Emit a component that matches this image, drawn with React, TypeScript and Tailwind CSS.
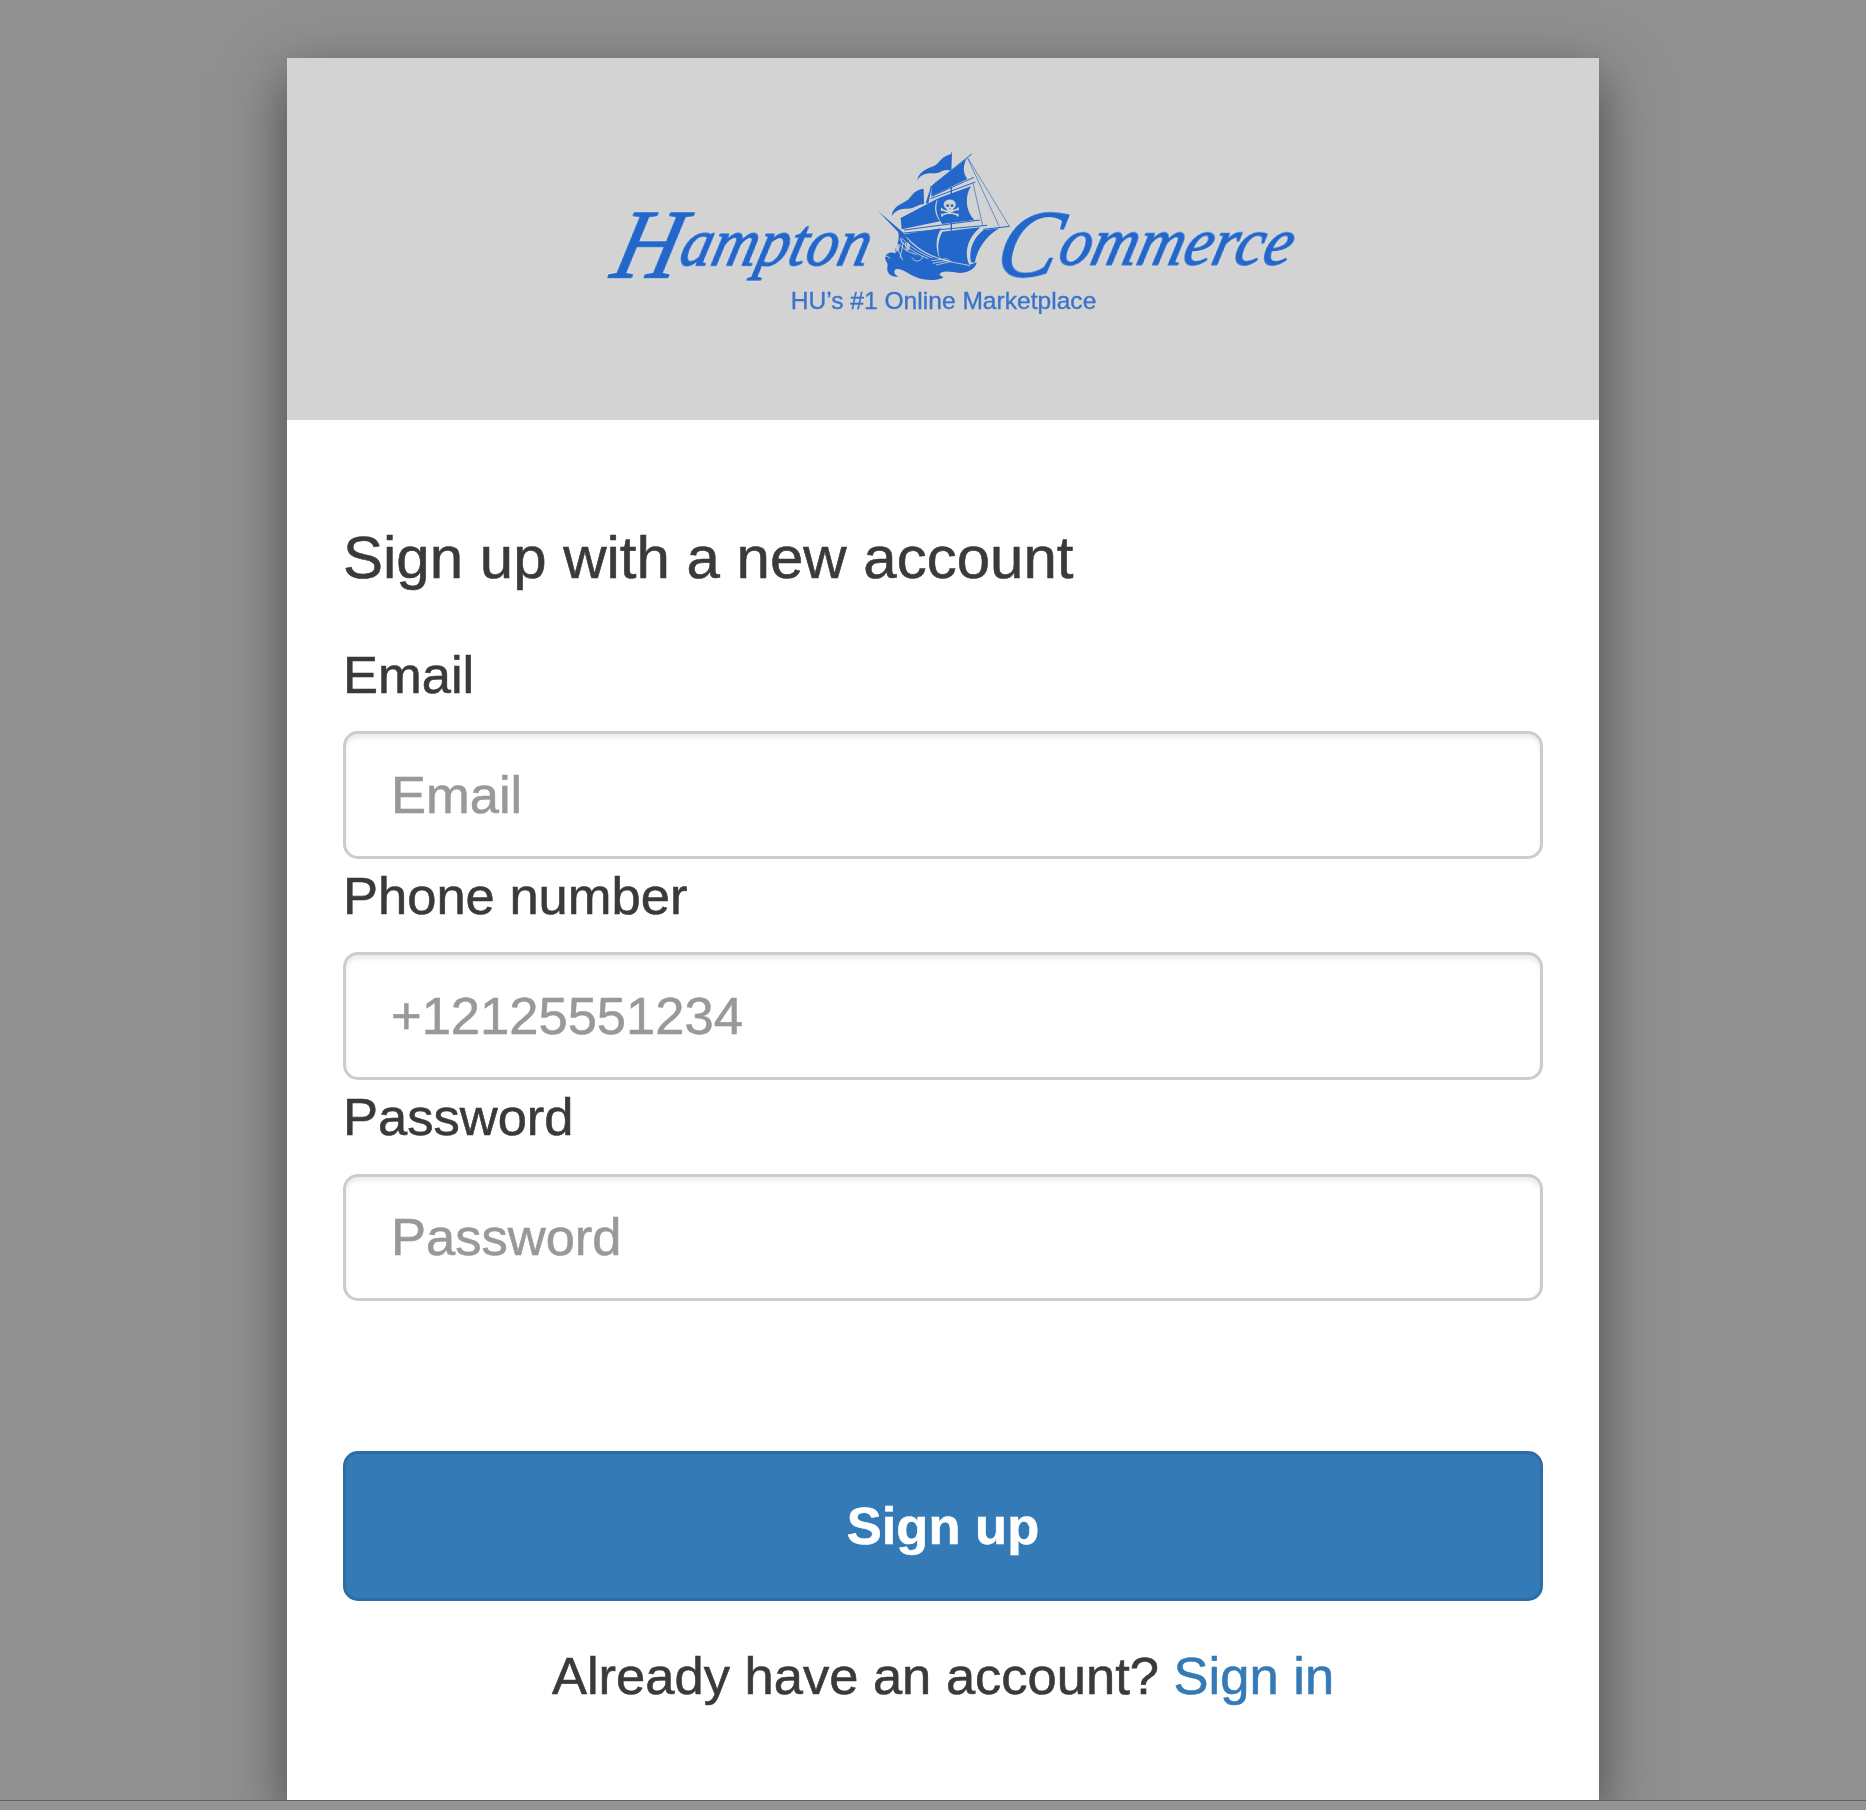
const BLUE = "#2467cb";
const PALE = "#d3d3d3";

function Ship() {
  return (
    <g transform="translate(810 0)" fill={BLUE} stroke="none">
      {/* flags */}
      <path d="M274 42 C246 48 240 66 226 76 C206 86 178 90 171 122 C182 103 198 100 216 100 C244 102 250 82 274 93 V36 H276 V94Z" />
      <path d="M191 146 C165 149 156 165 146 178 C127 192 98 198 95 228 C106 211 122 206 141 206 C166 206 174 192 189 193 H192Z" />
      {/* upper sail */}
      <path d="M215 137 L320 56 C308 76 309 100 322 117 L214 169Z" />
      {/* middle sails */}
      <path d="M122 235 L233 176 C220 198 224 224 240 244 L125 268Z" />
      <path d="M236 174 L333 139 C314 168 316 214 343 240 L247 252 C226 224 225 196 236 174Z" />
      {/* lower sails and bow */}
      <path d="M132 283 L244 265 C226 292 226 330 240 356 C205 345 165 320 132 283Z" />
      <path d="M247 275 L361 262 C316 300 314 345 329 376 C300 370 270 363 240 356 C231 325 234 298 247 275Z" />
      <path d="M371 270 L418 265 C376 290 354 325 344 368 L333 367 C326 330 338 295 371 270Z" />
      {/* hull */}
      <path d="M114 272 C122 275 128 282 136 290 C165 325 206 350 252 358 L330 376 L348 368 L310 386 L140 372 L108 354 L106 325 C112 312 120 300 114 272Z" />
      {/* waves */}
      <path d="M75 352 C79 334 107 333 118 350 C128 364 139 345 160 349 C190 360 220 378 260 374 C290 376 325 380 350 367 C347 389 320 399 300 399 C275 397 246 388 238 404 C243 407 248 410 250 413 C228 423 194 422 169 412 C142 402 125 383 107 388 C98 395 105 405 115 410 C94 413 79 400 82 381 C86 368 75 365 75 352Z" />
      <path d="M75 352 C80 345 87 350 89 357" fill="none" stroke={PALE} strokeWidth="3" />
      {/* bowsprit, mast and rigging */}
      <path d="M54 213 L130 278 L150 306 L128 290Z" />
      <g fill="none" stroke={BLUE}>
        <path d="M203 190 L214 138 M199 190 L209 158 M274 140 V170 M274 248 V272" strokeWidth="4" />
        <path d="M220 134 L335 42 M215 169 L342 112 M212 176 L346 126 M122 236 L236 176 M132 270 L360 240 M131 279 L381 256 M370 268 L449 259" strokeWidth="3" />
        <path d="M323 53 L448 259 M323 55 L418 260 M339 130 L368 256" strokeWidth="2.4" opacity=".8" />
      </g>
      <g fill="none" stroke={PALE} strokeWidth="2.5">
        <path d="M125 294 C155 325 190 345 218 354 M120 298 C142 326 170 342 205 356 M140 292 C175 333 215 352 275 365 M118 312 C133 330 150 338 170 344" />
        <path d="M155 352 C164 368 184 367 188 348 M215 362 L262 356 M218 370 L268 360 M228 375 L270 365 M240 356 C270 368 300 370 330 377" />
        <path d="M108 314 L128 360 M130 308 L120 354 M136 308 L139 334 M122 294 L127 312" />
      </g>
      <g fill={PALE}>
        <path d="M107 315 l8 -4 5 8 -4 13 -7 3 -3 -12Z" opacity=".8" />
        <path d="M139 312 l6 -5 5 8 -2 14 -7 3Z" opacity=".8" />
      </g>
      {/* skull and crossbones */}
      <g stroke={PALE} strokeWidth="5" strokeLinecap="round" fill={PALE}>
        <path d="M246 209 L293 225 M247 225 L293 207" />
        <path d="M245 206 v5 M294 204 v5 M246 223 v5 M293 223 v5" />
        <path d="M252 194 C250 176 286 173 287 193 C287 201 281 204 279 207 L278 217 H262 L261 207 C256 204 252 201 252 194Z" strokeWidth="1" />
      </g>
      <g>
        <ellipse cx="263" cy="197" rx="4.5" ry="4" />
        <ellipse cx="276" cy="197" rx="4.5" ry="4" />
        <path d="M268 208 l2 -5 2 5Z" />
      </g>
    </g>
  );
}

function Logo() {
  return (
    <svg
      className="-ml-[1px] h-[180px] w-[800px] shrink-0 overflow-visible"
      viewBox="0 0 2400 540"
      role="img"
      aria-label="Hampton Commerce"
    >
      <g
        fill={BLUE}
        stroke={BLUE}
        strokeWidth="4"
        strokeLinejoin="round"
        className="font-['Liberation_Serif',serif] italic drop-shadow-[0_0_3px_#e6edf7]"
      >
        <text transform="translate(66 375) skewX(-14)" fontSize="205" textLength="762" lengthAdjust="spacingAndGlyphs">
          <tspan fontSize="296" dy="38">H</tspan>
          <tspan dy="-38">ampton</tspan>
        </text>
        <text transform="translate(1216 375) skewX(-14)" fontSize="205" textLength="880" lengthAdjust="spacingAndGlyphs">
          <tspan fontSize="290" dy="34">C</tspan>
          <tspan dy="-34">ommerce</tspan>
        </text>
      </g>
      <Ship />
      <text
        x="602"
        y="506"
        fontSize="71"
        textLength="917"
        lengthAdjust="spacingAndGlyphs"
        fill="#3a73cb"
        stroke="#3a73cb"
        strokeWidth="1"
        className="font-['Liberation_Sans',Arial,sans-serif]"
      >
        HU’s #1 Online Marketplace
      </text>
    </svg>
  );
}

const fields = [
  {
    id: "email",
    label: "Email",
    placeholder: "Email",
    type: "email",
    labelClass: "mb-[19px]",
    inputClass: "h-[128px]",
  },
  {
    id: "phone",
    label: "Phone number",
    placeholder: "+12125551234",
    type: "tel",
    labelClass: "mb-[19px]",
    inputClass: "h-[128px]",
  },
  {
    id: "password",
    label: "Password",
    placeholder: "Password",
    type: "password",
    labelClass: "mb-[20px]",
    inputClass: "h-[127px]",
  },
];

export default function App() {
  return (
    <div className="flex h-[1810px] w-[1866px] flex-col overflow-hidden bg-[#909090] font-['Liberation_Sans',Arial,sans-serif] text-[52.5px] leading-[75px] text-[#3a3a3a]">
      <div className="h-[1800px] overflow-hidden pt-[58px] pl-[287px]">
        <main className="h-[1742px] w-[1312px] bg-white shadow-[0_19px_54px_rgba(0,0,0,0.5)]">
          <header className="flex h-[362px] items-start bg-[#d3d3d3] pt-[82px] pl-[304px]">
            <Logo />
          </header>
          <form
            className="px-14 pt-[104px] [-webkit-text-stroke:0.6px_currentColor]"
            onSubmit={(e) => e.preventDefault()}
          >
            <h1 className="mb-[46px] text-[60px] leading-[67px]">Sign up with a new account</h1>
            {fields.map((f) => (
              <div key={f.id} className="h-[221px]">
                <label htmlFor={f.id} className={`block ${f.labelClass}`}>
                  {f.label}
                </label>
                <input
                  id={f.id}
                  type={f.type}
                  placeholder={f.placeholder}
                  className={`block w-full rounded-[15px] border-[3px] border-[#ccc] bg-white px-[45px] pb-[2px] shadow-[inset_0_4px_4px_rgba(0,0,0,0.075)] outline-none placeholder:text-[#999] ${f.inputClass}`}
                />
              </div>
            ))}
            <button
              type="submit"
              className="mt-[151px] block h-[150px] w-full rounded-[15px] border-[3px] border-[#2e6da4] bg-[#337ab7] pb-[2px] font-bold text-white"
            >
              Sign up
            </button>
            <p className="mt-[37px] text-center">
              Already have an account?{" "}
              <a href="#" className="text-[#337ab7]">
                Sign in
              </a>
            </p>
          </form>
        </main>
      </div>
      <div className="h-[10px] border-t border-[#606060] bg-[#939393]" />
    </div>
  );
}
